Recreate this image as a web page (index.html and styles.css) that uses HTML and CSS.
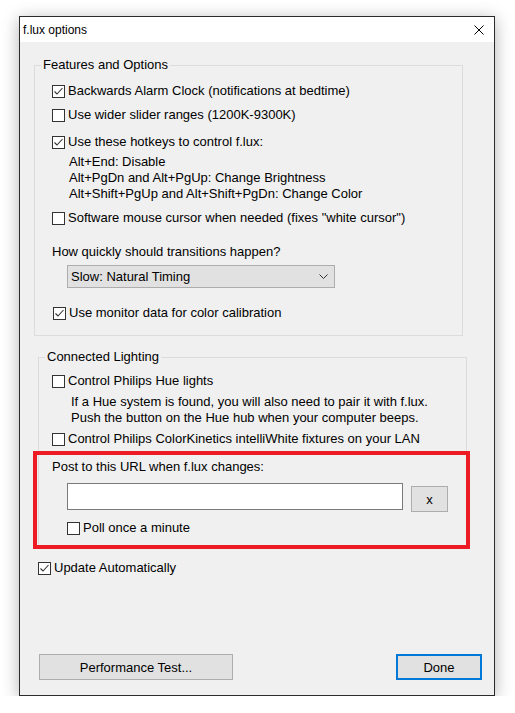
FILE: index.html
```html
<!DOCTYPE html>
<html lang="en">
<head>
  <meta charset="UTF-8">
  <meta name="viewport" content="width=device-width, initial-scale=1.0">
  <title>f.lux options</title>
  <link rel="stylesheet" href="styles.css">
</head>
<body>
  <div class="window">
    <div class="titlebar">
      <span>f.lux options</span>
      <svg class="close" width="10" height="10" viewBox="0 0 10 10">
        <path d="M0.5 0.5 L9.5 9.5 M9.5 0.5 L0.5 9.5" stroke="#000" stroke-width="1" fill="none"/>
      </svg>
    </div>

    <div class="content">
      <fieldset class="group features">
        <legend>Features and Options</legend>
        <div class="group-body">
          <label class="check"><span class="box"><svg width="11" height="11" viewBox="0 0 11 11"><polyline points="1.5,5.5 4,8 9.5,2" /></svg></span>Backwards Alarm Clock (notifications at bedtime)</label>
          <label class="check gap-8"><span class="box"></span>Use wider slider ranges (1200K-9300K)</label>
          <label class="check gap-11"><span class="box"><svg width="11" height="11" viewBox="0 0 11 11"><polyline points="1.5,5.5 4,8 9.5,2" /></svg></span>Use these hotkeys to control f.lux:</label>
          <div class="note hotkeys">
            Alt+End: Disable<br>
            Alt+PgDn and Alt+PgUp: Change Brightness<br>
            Alt+Shift+PgUp and Alt+Shift+PgDn: Change Color
          </div>
          <label class="check gap-8"><span class="box"></span>Software mouse cursor when needed (fixes "white cursor")</label>

          <div class="question">How quickly should transitions happen?</div>
          <div class="combo">
            <span>Slow: Natural Timing</span>
            <svg width="9" height="5" viewBox="0 0 9 5"><polyline points="0.5,0.5 4.5,4.5 8.5,0.5" /></svg>
          </div>

          <label class="check monitor"><span class="box"><svg width="11" height="11" viewBox="0 0 11 11"><polyline points="1.5,5.5 4,8 9.5,2" /></svg></span>Use monitor data for color calibration</label>
        </div>
      </fieldset>

      <fieldset class="group lighting">
        <legend>Connected Lighting</legend>
        <div class="group-body">
          <label class="check"><span class="box"></span>Control Philips Hue lights</label>
          <div class="note hue">
            If a Hue system is found, you will also need to pair it with f.lux.<br>
            Push the button on the Hue hub when your computer beeps.
          </div>
          <label class="check gap-5"><span class="box"></span>Control Philips ColorKinetics intelliWhite fixtures on your LAN</label>

          <div class="post-label">Post to this URL when f.lux changes:</div>
          <div class="url-row">
            <input type="text" class="url">
            <button class="btn clear">x</button>
          </div>
          <label class="check poll"><span class="box"></span>Poll once a minute</label>
        </div>
      </fieldset>

      <label class="check update"><span class="box"><svg width="11" height="11" viewBox="0 0 11 11"><polyline points="1.5,5.5 4,8 9.5,2" /></svg></span>Update Automatically</label>

      <div class="actions">
        <button class="btn perf">Performance Test...</button>
        <button class="btn done">Done</button>
      </div>
    </div>

    <!-- highlight drawn over the URL section -->
    <div class="highlight"></div>
  </div>
</body>
</html>
```

FILE: styles.css
```css
body {
  margin: 0;
  padding: 0;
  background-color: #ffffff;
  font-family: "Liberation Sans", Arial, sans-serif;
  font-size: 13px;
  color: #000;
}

.window {
  position: relative;
  box-sizing: border-box;
  width: 476px;
  height: 680px;
  margin: 16px 0 0 19px;
  border: 1px solid #2b2b2b;
  background-color: #f0f0f0;
  box-shadow: 0 3px 16px rgba(0, 0, 0, 0.3);
  display: flex;
  flex-direction: column;
}

.titlebar {
  height: 25px;
  background: white;
  display: flex;
  align-items: center;
  justify-content: space-between;
  padding-left: 3px;
  font-size: 12px;
}

.close {
  margin-right: 10px;
}

.content {
  flex: 1;
  display: flex;
  flex-direction: column;
  padding-top: 15px;
}

.group {
  box-sizing: border-box;
  width: 429px;
  margin: 0;
  padding: 0;
  border: 1px solid #dcdcdc;
  min-inline-size: 0;
}

.group legend {
  margin-left: 6px;
  padding: 0 2px;
  line-height: 16px;
}

.features {
  margin-left: 14px;
}

.features .group-body {
  padding: 10px 0 14px 17px;
}

.lighting {
  margin-left: 18px;
  margin-top: 13px;
}

.lighting .group-body {
  padding: 8px 0 12px 13px;
}

.check {
  display: flex;
  align-items: center;
  height: 16px;
  line-height: 16px;
  white-space: nowrap;
}

.box {
  box-sizing: border-box;
  width: 13px;
  height: 13px;
  border: 1px solid #333;
  background: white;
  margin-right: 3px;
  flex-shrink: 0;
}

.box svg {
  display: block;
}

.box polyline {
  fill: none;
  stroke: #333;
  stroke-width: 1.1;
}

.gap-5 { margin-top: 5px; }
.gap-8 { margin-top: 8px; }
.gap-11 { margin-top: 11px; }

.note {
  line-height: 16px;
  white-space: nowrap;
}

.hotkeys {
  margin-top: 4px;
  padding-left: 17px;
}

.question {
  margin-top: 18px;
  line-height: 16px;
}

.combo {
  box-sizing: border-box;
  width: 268px;
  height: 23px;
  margin: 5px 0 0 15px;
  padding: 0 6px 0 3px;
  border: 1px solid #adadad;
  background: #e1e1e1;
  display: flex;
  align-items: center;
  justify-content: space-between;
}

.combo polyline {
  fill: none;
  stroke: #333;
  stroke-width: 1;
}

.monitor {
  margin-top: 17px;
  margin-left: 1px;
}

.hue {
  margin-top: 5px;
  padding-left: 19px;
}

.post-label {
  margin-top: 12px;
  line-height: 16px;
}

.url-row {
  display: flex;
  align-items: flex-start;
  margin: 8px 0 0 15px;
}

.url {
  box-sizing: border-box;
  width: 336px;
  height: 27px;
  margin: 0;
  border: 1px solid #7a7a7a;
  background: white;
}

.btn {
  box-sizing: border-box;
  height: 26px;
  margin: 0;
  padding: 0;
  border: 1px solid #adadad;
  background: #e1e1e1;
  font-family: inherit;
  font-size: 13px;
  color: #000;
}

.clear {
  width: 37px;
  margin: 3px 0 0 8px;
}

.poll {
  margin: 8px 0 0 15px;
}

.update {
  margin: 11px 0 0 18px;
}

.actions {
  margin-top: auto;
  display: flex;
  justify-content: space-between;
  padding: 0 12px 15px 19px;
}

.perf {
  width: 194px;
}

.done {
  width: 86px;
  border: 2px solid #0078d7;
}

.highlight {
  position: absolute;
  box-sizing: border-box;
  left: 13px;
  top: 434px;
  width: 437px;
  height: 98px;
  border: 4px solid #ed1c24;
}
```
